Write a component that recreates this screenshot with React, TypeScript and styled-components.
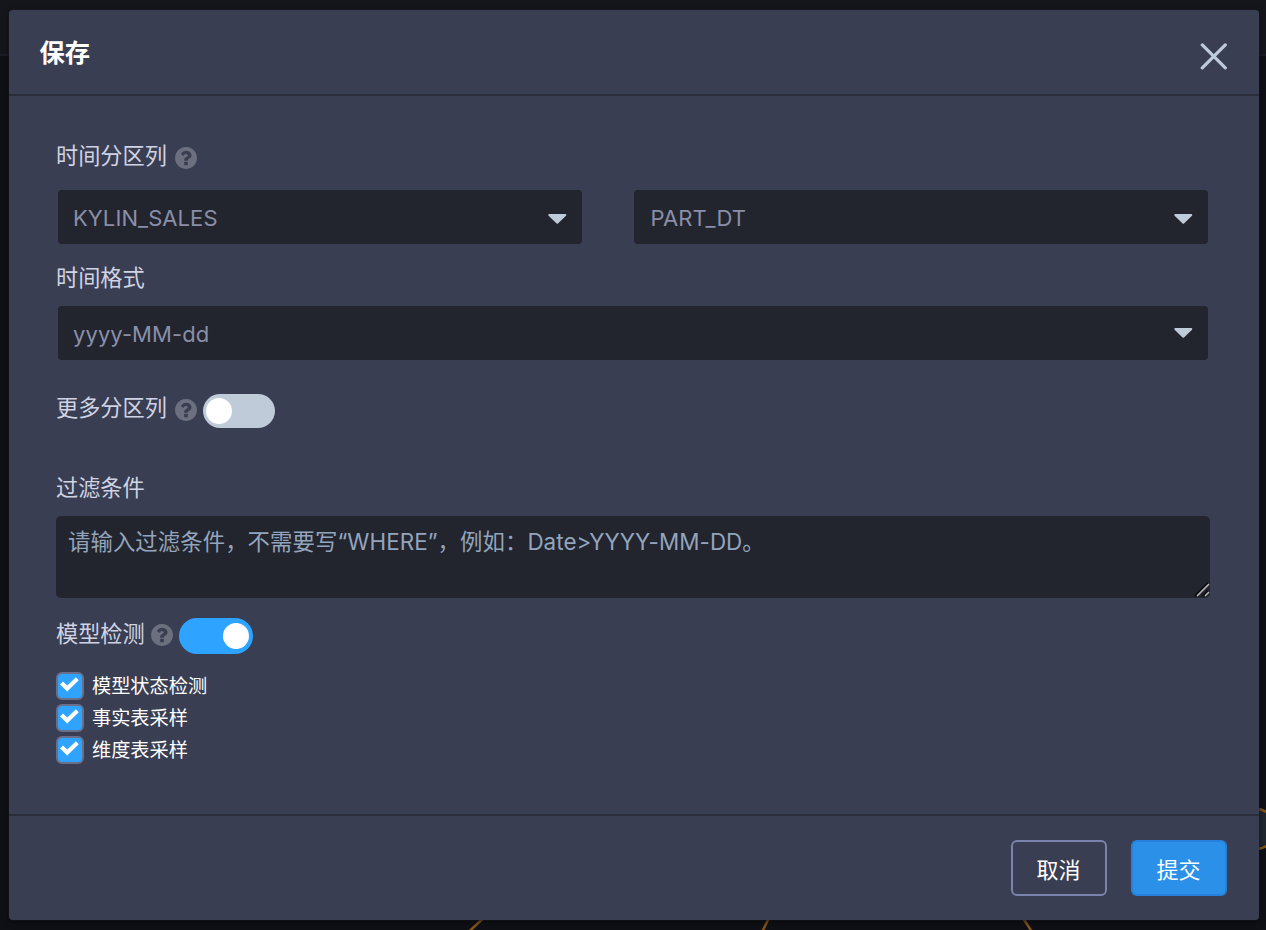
import React, { useState } from "react";
import styled, { createGlobalStyle } from "styled-components";

const GlobalStyle = createGlobalStyle`
  * { box-sizing: border-box; }
  html, body { margin: 0; padding: 0; }
  body {
    background: #0f1015;
    font-family: Inter, "Noto Sans CJK SC", sans-serif;
    overflow: hidden;
  }
`;

const Page = styled.div`
  position: relative;
  width: 1266px;
  height: 930px;
  padding: 10px 7.5px 10px 8.5px;
  background: linear-gradient(#15161b 0 54px, #1b1c26 54px 56px, #0f1015 56px);
  overflow: hidden;
`;

const Canvas = styled.svg`
  position: absolute;
  inset: 0;
`;

const Dialog = styled.section`
  position: relative;
  display: flex;
  flex-direction: column;
  height: 910px;
  background: #3a3e52;
  border-radius: 4px;
  box-shadow: 0 0 2px #20222e, 0 2px 6px rgba(0, 0, 0, 0.5);
`;

const Header = styled.header`
  display: flex;
  align-items: center;
  justify-content: space-between;
  height: 86px;
  padding: 0 31px;
  border-bottom: 2px solid #2b2d3b;
`;

const Title = styled.h1`
  margin: 1px 0 0;
  font-size: 25.3px;
  line-height: 36px;
  font-weight: 700;
  color: #fff;
`;

const CloseButton = styled.button`
  display: flex;
  padding: 0;
  margin-top: 8px;
  border: 0;
  background: none;
`;

const Body = styled.main`
  flex: 1;
  padding: 40px 48px 0 47.5px;
`;

const LabelRow = styled.div<{ $before?: number; $after?: number }>`
  display: flex;
  align-items: center;
  height: 42px;
  margin-top: ${(p) => p.$before ?? 0}px;
  margin-bottom: ${(p) => p.$after ?? 0}px;
`;

const LabelGroup = styled.div<{ $lift?: number }>`
  display: flex;
  align-items: center;
  padding-bottom: ${(p) => (p.$lift ?? 0) * 2}px;
`;

const Label = styled.label`
  font-size: 22.2px;
  line-height: 32px;
  color: #cfd3e3;
  margin-bottom: 2px;
  white-space: nowrap;
`;

const Help = styled.svg<{ $tight?: boolean }>`
  width: 22px;
  height: 22px;
  margin: 1px 6px 0 ${(p) => (p.$tight ? 6 : 8)}px;
  fill: #6c6f7d;
`;

const SelectRow = styled.div`
  display: grid;
  grid-template-columns: 524px 574px;
  gap: 52px;
  margin: 0 2px;
`;

const SelectBox = styled.div`
  display: flex;
  align-items: center;
  justify-content: space-between;
  height: 54px;
  padding: 0 15px;
  border-radius: 4px;
  background: #22242e;
  color: #8a8fa8;
  font-size: 22px;
  line-height: 30px;
`;

const WideSelect = styled(SelectBox)`
  width: 1150px;
  margin: 0 2px;
`;

const SelectText = styled.span<{ $indent?: number }>`
  padding-top: 1px;
  padding-left: ${(p) => p.$indent ?? 0}px;
  letter-spacing: 0.08px;
`;

const CaretIcon = styled.svg<{ $drop?: number }>`
  margin-top: ${(p) => p.$drop ?? 0}px;
`;

const Track = styled.button<{ $on: boolean }>`
  display: flex;
  align-items: center;
  justify-content: ${(p) => (p.$on ? "flex-end" : "flex-start")};
  width: ${(p) => (p.$on ? 74 : 72)}px;
  height: ${(p) => (p.$on ? 36 : 34)}px;
  padding: 0 4px 0 3px;
  border: 0;
  border-radius: 18px;
  background: ${(p) => (p.$on ? "#2ea3ff" : "#bfcbd9")};
`;

const Knob = styled.span`
  width: 26px;
  height: 26px;
  border-radius: 50%;
  background: #fff;
`;

const AreaWrap = styled.div`
  position: relative;
  display: flex;
`;

const Area = styled.textarea`
  width: 1154px;
  height: 82px;
  flex: none;
  margin: 0;
  padding: 10px 12px;
  border: 0;
  border-radius: 5px;
  outline: 0;
  resize: none;
  background: #22242e;
  color: #fff;
  font: 22.4px/32px Inter, "Noto Sans CJK SC", sans-serif;
  letter-spacing: 0.06px;
  &::placeholder { color: #93a5bd; opacity: 1; }
`;

const Grip = styled.svg`
  position: absolute;
  left: 1138px;
  top: 65px;
`;

const CheckList = styled.div`
  display: flex;
  flex-direction: column;
  margin-top: 15px;
`;

const CheckItem = styled.div`
  display: flex;
  align-items: center;
  height: 32px;
  padding-bottom: 4px;
  gap: 8px;
  font-size: 19.2px;
  line-height: 28px;
  color: #fff;
`;

const CheckBox = styled.span`
  display: flex;
  justify-content: center;
  width: 28px;
  height: 28px;
  border: 2px solid #6b6e88;
  border-radius: 6px;
  background: #2ea3ff;
`;

const Footer = styled.footer`
  display: flex;
  justify-content: flex-end;
  gap: 24px;
  height: 106px;
  padding: 24px 32px;
  border-top: 2px solid #2b2d3b;
`;

const Button = styled.button<{ $primary?: boolean }>`
  width: 96px;
  height: 56px;
  padding: 4px 0 0;
  border: 2px solid ${(p) => (p.$primary ? "#2780dc" : "#7b82ab")};
  border-radius: 6px;
  background: ${(p) => (p.$primary ? "#2b91e8" : "transparent")};
  color: #fff;
  font: 22px/32px Inter, "Noto Sans CJK SC", sans-serif;
`;

const HelpIcon = ({ tight }: { tight?: boolean }) => (
  <Help $tight={tight} viewBox="128 128 1536 1536">
    <path
      fillRule="evenodd"
      d="M1024 1376v-192q0-14-9-23t-23-9H800q-14 0-23 9t-9 23v192q0 14 9 23t23 9h192q14 0 23-9t9-23zm256-672q0-88-55.500-163t-138.500-116-170-41q-243 0-371 213-15 24 8 42l132 100q7 6 19 6 16 0 25-12 53-68 86-92 34-24 86-24 48 0 85.500 26t37.500 59q0 38-20 61t-68 45q-63 28-115.500 86.500T768 1020v36q0 14 9 23t23 9h192q14 0 23-9t9-23q0-19 21.500-49.500t54.500-49.500q32-18 49-28.500t46-35 44.500-48 28-60.500 12.500-81zm384 192q0 209-103 385.500t-279.500 279.500-385.500 103-385.500-103-279.500-279.500-103-385.500 103-385.500 279.500-279.500 385.500-103 385.500 103 279.500 279.500 103 385.500z"
    />
  </Help>
);

const Caret = ({ drop }: { drop?: number }) => (
  <CaretIcon $drop={drop} width="20" height="12" viewBox="0 0 20 12">
    <path d="M2.300 2H18.300L10.300 9.800Z" fill="#bfcbd9" stroke="#bfcbd9" strokeWidth="2" strokeLinejoin="round" />
  </CaretIcon>
);

const Tick = () => (
  <svg width="22" height="22" viewBox="0 0 22 22">
    <path d="M2.500 9L8.200 14.500L18.300 4.800" fill="none" stroke="#fff" strokeWidth="4.200" />
  </svg>
);

const Toggle = ({ initial }: { initial: boolean }) => {
  const [on, setOn] = useState(initial);
  return (
    <Track $on={on} role="switch" aria-checked={on} onClick={() => setOn(!on)}>
      <Knob />
    </Track>
  );
};

const checks = ["模型状态检测", "事实表采样", "维度表采样"];

export default function App() {
  return (
    <>
      <GlobalStyle />
      <Page>
        <Canvas width="1266" height="930" fill="none" stroke="#835518" strokeWidth="2.500">
          <circle cx="1256" cy="829" r="20" fill="#20272e" />
          <path d="M483 918.500L468 932.500M769 918L762 932M1023 918L1032 932" />
        </Canvas>
        <Dialog role="dialog">
          <Header>
            <Title>保存</Title>
            <CloseButton aria-label="close">
              <svg width="28" height="28" viewBox="0 0 28 28" stroke="#bfcbd9" strokeWidth="3.200" strokeLinecap="round">
                <path d="M2.300 2.900L25.300 25.900M25.300 2.900L2.300 25.900" />
              </svg>
            </CloseButton>
          </Header>
          <Body>
            <LabelRow $after={12}>
              <Label>时间分区列</Label>
              <HelpIcon />
            </LabelRow>
            <SelectRow>
              <SelectBox>
                <SelectText>KYLIN_SALES</SelectText>
                <Caret drop={3} />
              </SelectBox>
              <SelectBox>
                <SelectText $indent={1.5}>PART_DT</SelectText>
                <Caret drop={3} />
              </SelectBox>
            </SelectRow>
            <LabelRow $before={14} $after={6}>
              <Label>时间格式</Label>
            </LabelRow>
            <WideSelect>
              <SelectText>yyyy-MM-dd</SelectText>
              <Caret />
            </WideSelect>
            <LabelRow $before={30}>
              <LabelGroup $lift={2}>
                <Label>更多分区列</Label>
                <HelpIcon />
              </LabelGroup>
              <Toggle initial={false} />
            </LabelRow>
            <LabelRow $before={36} $after={6}>
              <Label>过滤条件</Label>
            </LabelRow>
            <AreaWrap>
              <Area placeholder="请输入过滤条件，不需要写“WHERE”，例如：Date>YYYY-MM-DD。" />
              <Grip width="16" height="16" viewBox="0 0 16 16">
                <path d="M1 15L14 2M9 15L14 10" stroke="#0c0c0f" strokeWidth="2" />
                <path d="M3 15L15 3M11 15L15 11" stroke="#b9b9b9" strokeWidth="1.600" />
              </Grip>
            </AreaWrap>
            <LabelRow $before={17}>
              <LabelGroup $lift={1.5}>
                <Label>模型检测</Label>
                <HelpIcon tight />
              </LabelGroup>
              <Toggle initial={true} />
            </LabelRow>
            <CheckList>
              {checks.map((text) => (
                <CheckItem key={text}>
                  <CheckBox>
                    <Tick />
                  </CheckBox>
                  {text}
                </CheckItem>
              ))}
            </CheckList>
          </Body>
          <Footer>
            <Button>取消</Button>
            <Button $primary>提交</Button>
          </Footer>
        </Dialog>
      </Page>
    </>
  );
}
